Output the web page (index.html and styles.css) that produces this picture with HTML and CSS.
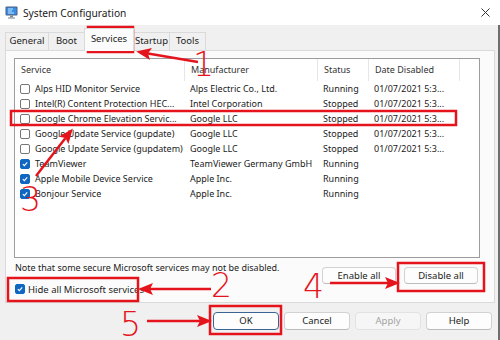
FILE: index.html
```html
<!DOCTYPE html>
<html>
<head>
	<title>System Configuration</title>
	<meta charset="utf-8">
	<link rel="stylesheet" href="styles.css">
</head>
<body>
	<div class="titlebar">
		<svg class="app-icon" viewBox="0 0 13 13">
			<rect x="0.5" y="0.5" width="12" height="9" rx="1" fill="#4a5f7e"/>
			<rect x="1.5" y="1.5" width="10" height="7" fill="#3b8ee6"/>
			<path d="M3 3h5M3 5h4M3 7h6" stroke="#d6ecff" stroke-width="0.9"/>
			<rect x="5" y="9.5" width="3" height="2" fill="#7d8796"/>
			<rect x="3" y="11.3" width="7" height="1.4" fill="#9aa3b0"/>
		</svg>
		<span class="title">System Configuration</span>
		<svg class="close" viewBox="0 0 9 9">
			<path d="M0.5 0.5L8.5 8.5M8.5 0.5L0.5 8.5" stroke="#333" stroke-width="1"/>
		</svg>
	</div>

	<div class="main">
		<div class="tabs">
			<span class="tab t-general">General</span>
			<span class="tab t-boot">Boot</span>
			<span class="tab t-services active">Services</span>
			<span class="tab t-startup">Startup</span>
			<span class="tab t-tools">Tools</span>
		</div>

		<div class="page">
			<div class="list">
				<div class="row head">
					<span class="cell">Service</span>
					<span class="cell">Manufacturer</span>
					<span class="cell">Status</span>
					<span class="cell">Date Disabled</span>
					<span></span>
				</div>
				<div class="row">
					<span class="cell name"><i class="cb"></i>Alps HID Monitor Service</span>
					<span class="cell">Alps Electric Co., Ltd.</span>
					<span class="cell">Running</span>
					<span class="cell">01/07/2021 5:3...</span>
					<span></span>
				</div>
				<div class="row">
					<span class="cell name"><i class="cb"></i>Intel(R) Content Protection HEC...</span>
					<span class="cell">Intel Corporation</span>
					<span class="cell">Stopped</span>
					<span class="cell">01/07/2021 5:3...</span>
					<span></span>
				</div>
				<div class="row">
					<span class="cell name"><i class="cb"></i>Google Chrome Elevation Servic...</span>
					<span class="cell">Google LLC</span>
					<span class="cell">Stopped</span>
					<span class="cell">01/07/2021 5:3...</span>
					<span></span>
				</div>
				<div class="row">
					<span class="cell name"><i class="cb"></i>Google Update Service (gupdate)</span>
					<span class="cell">Google LLC</span>
					<span class="cell">Stopped</span>
					<span class="cell">01/07/2021 5:3...</span>
					<span></span>
				</div>
				<div class="row">
					<span class="cell name"><i class="cb"></i>Google Update Service (gupdatem)</span>
					<span class="cell">Google LLC</span>
					<span class="cell">Stopped</span>
					<span class="cell">01/07/2021 5:3...</span>
					<span></span>
				</div>
				<div class="row">
					<span class="cell name"><i class="cb on"><svg viewBox="0 0 10 10"><path d="M2.3 5.2L4.2 7.1L7.8 3.1"/></svg></i>TeamViewer</span>
					<span class="cell">TeamViewer Germany GmbH</span>
					<span class="cell">Running</span>
					<span class="cell"></span>
					<span></span>
				</div>
				<div class="row">
					<span class="cell name"><i class="cb on"><svg viewBox="0 0 10 10"><path d="M2.3 5.2L4.2 7.1L7.8 3.1"/></svg></i>Apple Mobile Device Service</span>
					<span class="cell">Apple Inc.</span>
					<span class="cell">Running</span>
					<span class="cell"></span>
					<span></span>
				</div>
				<div class="row">
					<span class="cell name"><i class="cb on"><svg viewBox="0 0 10 10"><path d="M2.3 5.2L4.2 7.1L7.8 3.1"/></svg></i>Bonjour Service</span>
					<span class="cell">Apple Inc.</span>
					<span class="cell">Running</span>
					<span class="cell"></span>
					<span></span>
				</div>
			</div>

			<div class="under">
				<div class="under-left">
					<p class="note">Note that some secure Microsoft services may not be disabled.</p>
					<div class="hide"><i class="cb on"><svg viewBox="0 0 10 10"><path d="M2.3 5.2L4.2 7.1L7.8 3.1"/></svg></i>Hide all Microsoft services</div>
				</div>
				<div class="under-right">
					<span class="btn wide">Enable all</span>
					<span class="btn wide">Disable all</span>
				</div>
			</div>
		</div>

		<div class="footer">
			<span class="btn default">OK</span>
			<span class="btn">Cancel</span>
			<span class="btn disabled">Apply</span>
			<span class="btn">Help</span>
		</div>
	</div>

	<svg class="marks" viewBox="0 0 500 340">
		<defs>
			<marker id="head" markerUnits="userSpaceOnUse" markerWidth="15" markerHeight="12" refX="3" refY="6" orient="auto">
				<path d="M0 0L15 6L0 12L3 6Z" fill="#e5141c"/>
			</marker>
		</defs>
		<g fill="none" stroke="#e5141c" stroke-width="2.5">
			<rect x="88" y="27" width="45" height="25"/>
			<rect x="11" y="111" width="445" height="14"/>
			<rect x="8" y="278" width="130" height="23"/>
			<rect x="398" y="263" width="86" height="28"/>
			<rect x="210" y="306" width="71" height="28"/>
			<line x1="198" y1="62" x2="148" y2="53.5" marker-end="url(#head)"/>
			<line x1="36" y1="176" x2="65.5" y2="138" marker-end="url(#head)"/>
			<line x1="211" y1="289" x2="150" y2="289" marker-end="url(#head)"/>
			<line x1="330" y1="283" x2="388" y2="283" marker-end="url(#head)"/>
			<line x1="147" y1="321" x2="200" y2="321" marker-end="url(#head)"/>
		</g>
		<g class="nums">
			<text x="193" y="76">1</text>
			<text x="211" y="297">2</text>
			<text x="20" y="211">3</text>
			<text x="303" y="298">4</text>
			<text x="120" y="336">5</text>
		</g>
	</svg>
</body>
</html>
```

FILE: styles.css
```css
*{
	margin: 0;
	padding: 0;
	box-sizing: border-box;
}
body{
	position: relative;
	width: 500px;
	height: 340px;
	overflow: hidden;
	background: #f0f0f0;
	font-family: "Noto Sans", "Liberation Sans", sans-serif;
	font-size: 9px;
	color: #1b1b1b;
}

.titlebar{
	height: 25px;
	background: #fff;
	display: flex;
	align-items: center;
	padding: 0 10px 0 5px;
}
.app-icon{
	width: 13px;
	height: 13px;
}
.title{
	margin-left: 5px;
	font-size: 10.2px;
	color: #1a1a1a;
}
.close{
	margin-left: auto;
	width: 9px;
	height: 9px;
}

.main{
	height: 315px;
	border-right: 2px solid #6e6e6e;
}

.tabs{
	height: 25px;
	display: flex;
	align-items: flex-end;
	padding-left: 5px;
}
.tab{
	height: 18px;
	line-height: 16px;
	text-align: center;
	font-size: 9.5px;
	background: #f0f0f0;
	border: 1px solid #dadada;
	border-bottom: none;
	margin-right: -1px;
}
.t-general{ width: 44px; }
.t-boot{ width: 37px; }
.t-services{ width: 50px; }
.t-startup{ width: 37px; }
.t-tools{ width: 37px; }
.tab.active{
	position: relative;
	z-index: 1;
	height: 23px;
	line-height: 19px;
	margin-bottom: -1px;
	background: #fbfbfb;
}

.page{
	margin-left: 5px;
	width: 490px;
	height: 253px;
	border: 1px solid #dadada;
	background: #fbfbfb;
	padding: 7px 14px 0 8px;
}

.list{
	height: 200px;
	background: #fff;
	border: 1px solid #9c9c9c;
}
.row{
	display: grid;
	grid-template-columns: 170px 133px 51px 91px 1fr;
	height: 15px;
	line-height: 15px;
	white-space: nowrap;
}
.cell{
	padding-left: 5px;
	overflow: hidden;
}
.row.head{
	height: 22px;
	line-height: 22px;
	color: #333;
}
.row.head .cell{
	padding-left: 6px;
	border-right: 1px solid #e6e6e6;
}
.cell.name{
	display: flex;
	align-items: center;
}

.cb{
	flex: none;
	display: inline-block;
	width: 10px;
	height: 10px;
	margin-right: 5px;
	border: 1px solid #767676;
	border-radius: 2px;
	background: #fff;
}
.cb.on{
	background: #0f67c2;
	border-color: #0f67c2;
}
.cb svg{
	display: block;
	width: 8px;
	height: 8px;
}
.cb svg path{
	fill: none;
	stroke: #fff;
	stroke-width: 1.4;
}

.under{
	display: flex;
	justify-content: space-between;
}
.note{
	margin-top: 4px;
	padding-left: 1px;
	line-height: 12px;
}
.hide{
	display: flex;
	align-items: center;
	margin-top: 10px;
	padding-left: 1px;
	height: 10px;
	font-size: 9.5px;
}
.hide .cb{
	margin-right: 3px;
}
.under-right{
	display: flex;
	gap: 8px;
	margin-top: 9px;
	margin-right: 2px;
}

.btn{
	display: inline-block;
	width: 66px;
	height: 18px;
	line-height: 16px;
	text-align: center;
	font-size: 9.5px;
	background: #fdfdfd;
	border: 1px solid #d2d2d2;
	border-bottom-color: #bcbcbc;
	border-radius: 4px;
}
.btn.wide{
	width: 74px;
	height: 17px;
	line-height: 15px;
}
.btn.default{
	border: 1px solid #3a6493;
}
.btn.disabled{
	color: #a3a3a3;
	background: #f6f6f6;
	border-color: #e2e2e2;
}

.footer{
	display: flex;
	justify-content: flex-end;
	gap: 5px;
	padding-top: 9px;
	padding-right: 6px;
}

.marks{
	position: absolute;
	left: 0;
	top: 0;
	width: 500px;
	height: 340px;
	pointer-events: none;
}
.nums text{
	font-family: "DejaVu Sans", sans-serif;
	font-size: 33px;
	font-weight: 300;
	fill: #e5141c;
}
```
